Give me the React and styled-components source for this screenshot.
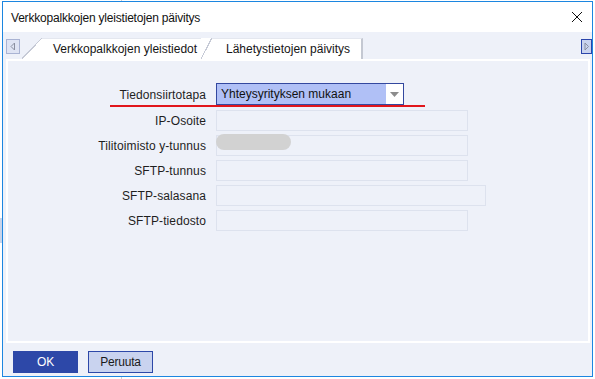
import React from "react";
import styled, { createGlobalStyle } from "styled-components";

const Global = createGlobalStyle`
  html, body { margin: 0; padding: 0; background: #fff; }
  body { font-family: "Liberation Sans", Arial, sans-serif; }
`;

const Desktop = styled.div`
  width: 595px;
  height: 379px;
  padding: 1px 0 0 2px;
  box-sizing: border-box;
  background:
    linear-gradient(#c8d4ea, #c8d4ea) 0 218px / 2px 25px no-repeat,
    linear-gradient(#d0d0d0, #d0d0d0) 121px 0 / 1px 100% no-repeat,
    #fff;
`;

const Window = styled.div`
  width: 591px;
  height: 376px;
  box-sizing: border-box;
  border: 1px solid #1c86e0;
  background: #eef1f9;
  display: flex;
  flex-direction: column;
`;

const TitleBar = styled.div`
  height: 30px;
  flex: none;
  background: #fff;
  display: flex;
  align-items: center;
  justify-content: space-between;
  padding: 0 9px 0 8px;
`;

const Title = styled.span`
  font-size: 12px;
  letter-spacing: -0.2px;
  color: #111;
  padding-top: 1px;
`;

const CloseButton = styled.span`
  width: 12px;
  height: 12px;
  display: flex;
`;

const TabStrip = styled.div`
  height: 27px;
  flex: none;
  display: flex;
  align-items: flex-start;
  padding-top: 6px;
  box-sizing: border-box;
`;

const ArrowButton = styled.div`
  width: ${(p) => p.$w}px;
  height: 15px;
  box-sizing: border-box;
  margin-top: 1px;
  border: 1px solid ${(p) => (p.$active ? "#2b45ab" : "#a9b3d3")};
  background: ${(p) => (p.$active ? "#c9d3ef" : "#dfe4f4")};
  display: flex;
  align-items: center;
  justify-content: ${(p) => (p.$right ? "flex-start" : "center")};
  padding-left: ${(p) => (p.$right ? "2px" : "0")};
  flex: none;
`;

const LeftArrowWrap = styled.div`
  padding-left: 3px;
  flex: none;
`;

const Tabs = styled.div`
  display: flex;
  flex: 1;
  height: 21px;
  margin-left: 2px;
`;

const Tab = styled.div`
  position: relative;
  height: 21px;
  box-sizing: border-box;
  background: #fff;
  border-top: 1px solid #e4e7ef;
  font-size: 12px;
  color: #151515;
  display: flex;
  align-items: center;
  padding-left: ${(p) => p.$padLeft}px;
  width: ${(p) => p.$w}px;
  border-right: ${(p) => (p.$last ? "2px solid #c4c8d2" : "none")};
  &::before {
    content: "";
    position: absolute;
    left: ${(p) => p.$slantLeft}px;
    top: -1px;
    width: ${(p) => p.$slantW}px;
    height: 21px;
    background: linear-gradient(
      to bottom right,
      ${(p) => p.$slantOuter} calc(50% - 0.7px),
      #c6cad6 calc(50% - 0.7px),
      #c6cad6 calc(50% + 0.5px),
      #fff calc(50% + 0.5px)
    );
  }
`;

const TabSpacer = styled.div`
  flex: 1;
`;

const Panel = styled.div`
  margin: 0 2px 0 3px;
  height: 284px;
  box-sizing: border-box;
  border: 2px solid #fff;
  background: #eef1f9;
  flex: none;
  padding-top: 22px;
`;

const Form = styled.div`
  position: relative;
  display: grid;
  grid-template-columns: 198px auto;
  column-gap: 10px;
  row-gap: 4px;
  justify-content: start;
  align-items: center;
`;

const Label = styled.div`
  font-size: 12px;
  color: #1e1e1e;
  text-align: right;
  white-space: nowrap;
  letter-spacing: 0.1px;
`;

const Field = styled.div`
  position: relative;
  width: ${(p) => p.$w}px;
  height: 21px;
  box-sizing: border-box;
  border: 1px solid #dde2ee;
  background: #eef1f9;
`;

const Select = styled.div`
  width: 188px;
  height: 22px;
  box-sizing: border-box;
  border: 1px solid #33489f;
  background: #b0c0f6;
  display: flex;
  align-items: stretch;
  margin-bottom: 1px;
`;

const SelectText = styled.span`
  flex: 1;
  font-size: 12px;
  color: #111;
  display: flex;
  align-items: center;
  padding-left: 4px;
`;

const DropButton = styled.span`
  width: 17px;
  background: #fff;
  display: flex;
  align-items: center;
  justify-content: center;
`;

const Redacted = styled.div`
  position: absolute;
  left: -1px;
  top: -2px;
  width: 75px;
  height: 16px;
  border-radius: 8px;
  background: #d2d2d2;
`;

const RedLine = styled.div`
  position: absolute;
  left: 102px;
  top: 22px;
  width: 315px;
  height: 2px;
  background: #e1161c;
`;

const Footer = styled.div`
  display: flex;
  gap: 10px;
  padding: 8px 0 0 10px;
`;

const Button = styled.div`
  width: 65px;
  height: 22px;
  box-sizing: border-box;
  font-size: 12px;
  display: flex;
  align-items: center;
  justify-content: center;
  background: ${(p) => (p.$primary ? "#2d48a8" : "#c9d3ef")};
  color: ${(p) => (p.$primary ? "#fff" : "#1a1a1a")};
  border: 1px solid #2d48a8;
  letter-spacing: -0.2px;
`;

const rows = [
  { label: "IP-Osoite", w: 252 },
  { label: "Tilitoimisto y-tunnus", w: 252, redacted: true },
  { label: "SFTP-tunnus", w: 252 },
  { label: "SFTP-salasana", w: 270 },
  { label: "SFTP-tiedosto", w: 252 },
];

export default function App() {
  return (
    <>
      <Global />
      <Desktop>
        <Window>
          <TitleBar>
            <Title>Verkkopalkkojen yleistietojen päivitys</Title>
            <CloseButton>
              <svg width="12" height="12" viewBox="0 0 12 12">
                <path d="M1 1L11 11M11 1L1 11" stroke="#111" strokeWidth="1" fill="none" />
              </svg>
            </CloseButton>
          </TitleBar>
          <TabStrip>
            <LeftArrowWrap>
              <ArrowButton $w={14}>
                <svg width="6" height="9" viewBox="0 0 6 9">
                  <path d="M4.5 1L1 4.5L4.5 8Z" fill="none" stroke="#8a8fa0" strokeWidth="1" />
                </svg>
              </ArrowButton>
            </LeftArrowWrap>
            <Tabs>
              <Tab $w={185} $padLeft={31} $slantLeft={0} $slantW={20} $slantOuter="#eef1f9">
                Verkkopalkkojen yleistiedot
              </Tab>
              <Tab $w={156} $padLeft={19} $slantLeft={-6} $slantW={11} $slantOuter="#fff" $last>
                Lähetystietojen päivitys
              </Tab>
              <TabSpacer />
            </Tabs>
            <ArrowButton $w={11} $active $right>
              <svg width="6" height="9" viewBox="0 0 6 9">
                <path d="M1 1L4.5 4.5L1 8Z" fill="none" stroke="#8a8fa0" strokeWidth="1" />
              </svg>
            </ArrowButton>
          </TabStrip>
          <Panel>
            <Form>
              <Label>Tiedonsiirtotapa</Label>
              <Select>
                <SelectText>Yhteysyrityksen mukaan</SelectText>
                <DropButton>
                  <svg width="9" height="5" viewBox="0 0 9 5">
                    <path d="M0 0H9L4.5 5Z" fill="#8c8c8c" />
                  </svg>
                </DropButton>
              </Select>
              {rows.map((r) => (
                <React.Fragment key={r.label}>
                  <Label>{r.label}</Label>
                  <Field $w={r.w}>{r.redacted && <Redacted />}</Field>
                </React.Fragment>
              ))}
              <RedLine />
            </Form>
          </Panel>
          <Footer>
            <Button $primary>OK</Button>
            <Button>Peruuta</Button>
          </Footer>
        </Window>
      </Desktop>
    </>
  );
}
